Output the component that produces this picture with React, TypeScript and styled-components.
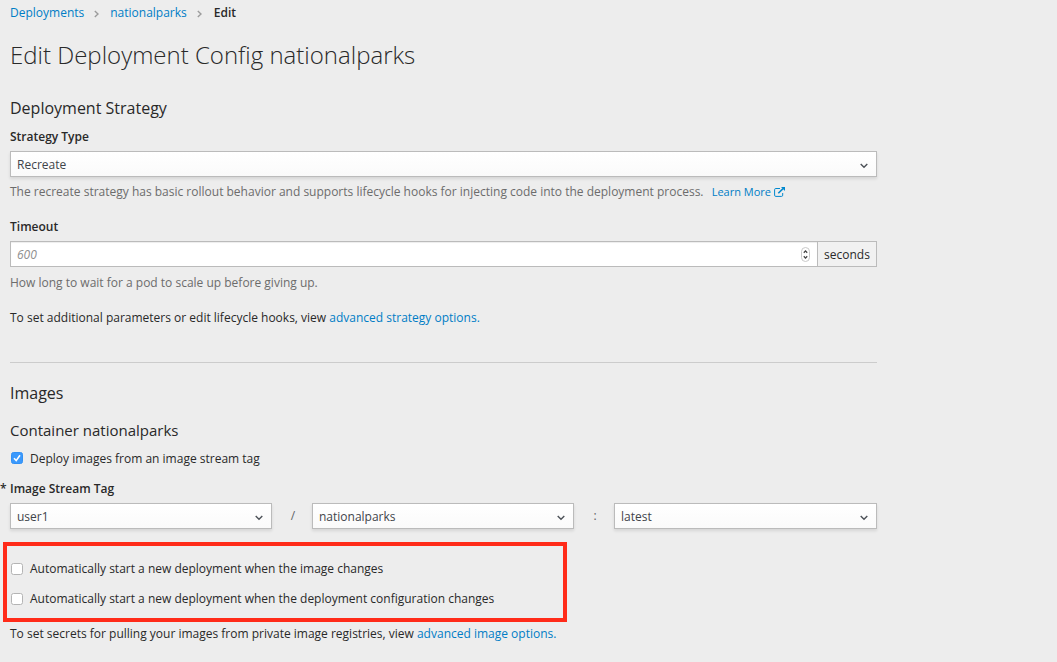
import React from "react";
import styled, { createGlobalStyle } from "styled-components";

const GlobalStyle = createGlobalStyle`
  * { box-sizing: border-box; }
  body {
    margin: 0;
    background: #ededed;
    color: #292929;
    font-family: "Open Sans", "Noto Sans", sans-serif;
    font-size: 12px;
    line-height: 22px;
    overflow: hidden;
  }
`;

const Page = styled.main`
  width: 877px;
  height: 662px;
  padding: 2px 0 0 10px;
  white-space: nowrap;
`;

const Breadcrumb = styled.nav`
  display: flex;
  align-items: center;
  height: 22px;
`;

const Separator = styled.svg`
  width: 5px;
  height: 8px;
  margin: 1px 11px 0 10px;
  fill: none;
  stroke: #9c9c9c;
  stroke-width: 1.4;
`;

const Link = styled.a`
  color: #007dc6;
  text-decoration: none;
`;

const Current = styled.span`
  margin-left: 1px;
  font-weight: 600;
`;

const Title = styled.h1`
  margin: 13px 0 0;
  font-size: 24px;
  font-weight: 300;
  line-height: 36px;
`;

const Heading = styled.h2<{ $top: number; $size?: number }>`
  margin: ${(p) => p.$top}px 0 0;
  font-size: ${(p) => p.$size ?? 16}px;
  font-weight: 400;
  line-height: 24px;
`;

const Label = styled.div<{ $top: number }>`
  position: relative;
  margin: ${(p) => p.$top}px 0 3px;
  font-weight: 600;
`;

const Required = styled.span`
  position: absolute;
  left: -10px;
`;

const Text = styled.p<{ $top: number; $muted?: boolean }>`
  margin: ${(p) => p.$top}px 0 0;
  color: ${(p) => (p.$muted ? "#6c6c6c" : "#292929")};
`;

const LearnMore = styled(Link)`
  margin-left: 5px;
  font-size: 11px;
`;

const ExternalSvg = styled.svg`
  width: 11px;
  height: 10px;
  margin-left: 3px;
  vertical-align: -1px;
`;

const SelectBox = styled.div`
  display: flex;
  align-items: center;
  justify-content: space-between;
  height: 26px;
  padding: 1px 8px 0 6px;
  border: 1px solid #bbb;
  background: linear-gradient(#fff, #fafafa);
  box-shadow: 0 2px 3px rgba(3, 3, 3, 0.1);
  color: #3f444a;
`;

const Chevron = styled.svg`
  width: 8px;
  height: 6px;
  margin-top: 3px;
  fill: none;
  stroke: #4d5258;
  stroke-width: 1.4;
`;

const InputGroup = styled.div`
  display: flex;
  height: 26px;
  border: 1px solid #bbb;
`;

const NumberField = styled.div`
  display: flex;
  align-items: center;
  justify-content: space-between;
  flex: 1;
  padding: 0 7px 0 6px;
  background: #fff;
  box-shadow: inset 0 1px 1px rgba(3, 3, 3, 0.075);
  color: #8f8f8f;
  font-style: italic;
`;

const Placeholder = styled.span`
  padding-top: 2px;
`;

const Stepper = styled.svg`
  width: 9px;
  height: 15px;
`;

const Addon = styled.div`
  display: flex;
  align-items: center;
  justify-content: center;
  width: 59px;
  padding-top: 2px;
  border-left: 1px solid #bbb;
  background: #f1f1f1;
`;

const Divider = styled.hr`
  height: 1px;
  margin: 33px 0 0;
  border: 0;
  background: #ccc;
`;

const TagRow = styled.div`
  display: grid;
  grid-template-columns: 262px 40px 262px 40px 1fr;
  align-items: center;
  height: 26px;
`;

const TagSeparator = styled.span`
  padding-left: 2px;
  text-align: center;
  color: #5f6368;
`;

const CheckRow = styled.div<{ $top?: number }>`
  display: flex;
  align-items: center;
  height: 22px;
  margin-top: ${(p) => p.$top ?? 0}px;
  padding-left: 1px;
`;

const CheckSvg = styled.svg`
  width: 12px;
  height: 12px;
  margin-right: 7px;
`;

const CheckText = styled.span<{ $drop?: boolean }>`
  padding-top: ${(p) => (p.$drop ? 2 : 0)}px;
`;

const Highlight = styled.section`
  width: 564px;
  height: 80px;
  margin: 13px 0 0 -7px;
  padding: 12px 0 0 3px;
  border: 4px solid #ff2b19;
`;

function Crumb() {
  return (
    <Separator viewBox="0 0 5 8">
      <path d="M.8 1 4 4 .8 7" />
    </Separator>
  );
}

function Select({ value }: { value: string }) {
  return (
    <SelectBox>
      <span>{value}</span>
      <Chevron viewBox="0 0 8 6">
        <path d="M.7 1 4 4.3 7.3 1" />
      </Chevron>
    </SelectBox>
  );
}

function Check({ label, checked, top }: { label: string; checked?: boolean; top?: number }) {
  return (
    <CheckRow $top={top}>
      <CheckSvg viewBox="0 0 12 12">
        <rect
          x=".5"
          y=".5"
          width="11"
          height="11"
          rx="2"
          fill={checked ? "#3b99fc" : "#fff"}
          stroke={checked ? "#3291f5" : "#b4b4b4"}
        />
        {checked && <path d="M3 6.3 5.2 8.6 9 3.2" fill="none" stroke="#fff" strokeWidth="1.6" />}
      </CheckSvg>
      <CheckText $drop={checked}>{label}</CheckText>
    </CheckRow>
  );
}

export default function App() {
  return (
    <>
      <GlobalStyle />
      <Page>
        <Breadcrumb>
          <Link>Deployments</Link>
          <Crumb />
          <Link>nationalparks</Link>
          <Crumb />
          <Current>Edit</Current>
        </Breadcrumb>
        <Title>Edit Deployment Config nationalparks</Title>

        <Heading $top={23}>Deployment Strategy</Heading>
        <Label $top={6}>Strategy Type</Label>
        <Select value="Recreate" />
        <Text $top={4} $muted>
          The recreate strategy has basic rollout behavior and supports lifecycle hooks for injecting code into the
          deployment process.{" "}
          <LearnMore>
            Learn More
            <ExternalSvg viewBox="0 0 11 10" fill="none" stroke="#0088ce">
              <path d="M6 1.5H1.8a1.2 1.2 0 0 0-1.2 1.2v5.5a1.2 1.2 0 0 0 1.2 1.2h5.7a1.2 1.2 0 0 0 1.2-1.2V6" />
              <path d="M4.3 6.3 9 1.6" strokeWidth="1.5" />
              <path d="M7 0h4v4z" fill="#0088ce" stroke="none" />
            </ExternalSvg>
          </LearnMore>
        </Text>

        <Label $top={13}>Timeout</Label>
        <InputGroup>
          <NumberField>
            <Placeholder>600</Placeholder>
            <Stepper viewBox="0 0 9 15">
              <rect x=".5" y=".5" width="8" height="14" rx="4" fill="#fff" stroke="#c8c8c8" />
              <path d="M2.8 5.7 4.5 3.9 6.2 5.7M2.8 9.3 4.5 11.1 6.2 9.3" fill="none" stroke="#444" strokeWidth="1.3" />
            </Stepper>
          </NumberField>
          <Addon>seconds</Addon>
        </InputGroup>
        <Text $top={5} $muted>
          How long to wait for a pod to scale up before giving up.
        </Text>
        <Text $top={13}>
          To set additional parameters or edit lifecycle hooks, view <Link>advanced strategy options.</Link>
        </Text>
        <Divider />

        <Heading $top={18}>Images</Heading>
        <Heading $top={13} $size={15}>
          Container nationalparks
        </Heading>
        <Check label="Deploy images from an image stream tag" checked top={5} />
        <Label $top={9}>
          <Required>*</Required>Image Stream Tag
        </Label>
        <TagRow>
          <Select value="user1" />
          <TagSeparator>/</TagSeparator>
          <Select value="nationalparks" />
          <TagSeparator>:</TagSeparator>
          <Select value="latest" />
        </TagRow>
        <Highlight>
          <Check label="Automatically start a new deployment when the image changes" />
          <Check label="Automatically start a new deployment when the deployment configuration changes" top={8} />
        </Highlight>
        <Text $top={1}>
          To set secrets for pulling your images from private image registries, view{" "}
          <Link>advanced image options.</Link>
        </Text>
      </Page>
    </>
  );
}
